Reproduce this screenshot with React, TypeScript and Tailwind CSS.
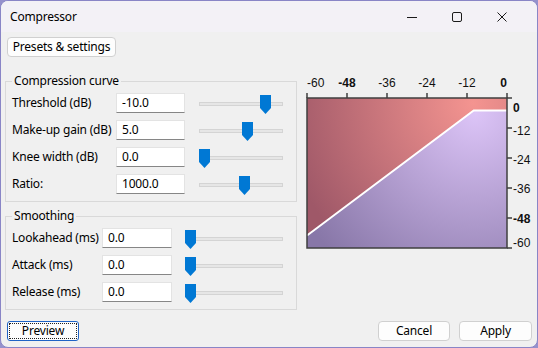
import React from 'react';

const curveRows = [
  { label: 'Threshold (dB)', value: '-10.0', pos: 61 },
  { label: 'Make-up gain (dB)', value: '5.0', pos: 43 },
  { label: 'Knee width (dB)', value: '0.0', pos: 0 },
  { label: 'Ratio:', value: '1000.0', pos: 40 },
];

const smoothRows = [
  { label: 'Lookahead (ms)', value: '0.0', pos: 0 },
  { label: 'Attack (ms)', value: '0.0', pos: 0 },
  { label: 'Release (ms)', value: '0.0', pos: 0 },
];

const ui = { fontFamily: '"Noto Sans", "Open Sans", sans-serif' };

function Slider({ width, pos }: { width: number; pos: number }) {
  return (
    <div className="relative h-[20px] shrink-0" style={{ width }}>
      <div className="absolute left-0 right-0 top-[9px] h-[4px] bg-[#e6e6e6] border border-[#d4d4d4]" />
      <svg
        className="absolute top-[2px]"
        style={{ left: pos }}
        width="11"
        height="19"
        viewBox="0 0 11 19"
      >
        <path d="M0 0 H11 V13 L5.5 19 L0 13 Z" fill="#0078d4" />
      </svg>
    </div>
  );
}

function TextBox({ value, width }: { value: string; width: number }) {
  return (
    <div
      className="h-[20px] shrink-0 bg-white border border-[#e3e3e3] border-b-[#868686] pl-[5px] text-[12px] leading-[18px] tracking-[-0.2px] text-black"
      style={{ width }}
    >
      {value}
    </div>
  );
}

function Graph() {
  const top = [
    { t: '-60', x: 7, a: 'start' },
    { t: '-48', x: 47, a: 'middle', b: true },
    { t: '-36', x: 87, a: 'middle' },
    { t: '-24', x: 127, a: 'middle' },
    { t: '-12', x: 167, a: 'middle' },
    { t: '0', x: 207, a: 'end', b: true },
  ];
  const right = [
    { t: '0', y: 34, b: true },
    { t: '-12', y: 57 },
    { t: '-24', y: 86 },
    { t: '-36', y: 115 },
    { t: '-48', y: 145, b: true },
    { t: '-60', y: 169 },
  ];
  return (
    <svg width="236" height="185" viewBox="0 0 236 185" className="shrink-0">
      <defs>
        <radialGradient id="up" cx="173" cy="30" r="190" gradientUnits="userSpaceOnUse">
          <stop offset="0" stopColor="#f49490" />
          <stop offset="1" stopColor="#9f5868" />
        </radialGradient>
        <radialGradient id="low" cx="175" cy="40" r="200" gradientUnits="userSpaceOnUse">
          <stop offset="0" stopColor="#dcc4f7" />
          <stop offset="1" stopColor="#8877a8" />
        </radialGradient>
      </defs>
      <polygon points="7,25 207,25 207,37.5 173.7,37.5 7,162.5" fill="url(#up)" />
      <polygon points="7,162.5 173.7,37.5 207,37.5 207,175 7,175" fill="url(#low)" />
      <polyline
        points="7,162.5 173.7,37.5 207,37.5"
        fill="none"
        stroke="#ffffff"
        strokeWidth="2"
      />
      <rect x="7" y="25" width="200" height="150" fill="none" stroke="#3f3f3f" strokeWidth="1.5" />
      <g fontFamily='"Liberation Sans", Arial, sans-serif' fontSize="12" fill="#111">
        {top.map((l) => (
          <g key={l.t}>
            <line x1={l.x} y1="20" x2={l.x} y2="25" stroke="#3f3f3f" strokeWidth="1.5" />
            <text
              x={l.x}
              y="14"
              textAnchor={l.a as 'start' | 'middle' | 'end'}
              fontWeight={l.b ? 700 : 400}
            >
              {l.t}
            </text>
          </g>
        ))}
        {right.map((l, i) => (
          <g key={l.t}>
            <line x1="207" y1={25 + i * 30} x2="212" y2={25 + i * 30} stroke="#3f3f3f" strokeWidth="1.5" />
            <text x="213" y={l.y + 4.5} fontWeight={l.b ? 700 : 400}>
              {l.t}
            </text>
          </g>
        ))}
      </g>
    </svg>
  );
}

function WinButton({ children, className = '' }: { children: React.ReactNode; className?: string }) {
  return (
    <button
      className={`h-[20px] bg-[#fdfdfd] border border-[#d0d0d0] rounded-[4px] text-[12px] leading-[16px] tracking-[-0.2px] text-black ${className}`}
    >
      {children}
    </button>
  );
}

export default function App() {
  return (
    <div className="w-[538px] h-[348px] bg-[#9591cc]" style={ui}>
      <div className="w-[538px] h-[348px] flex flex-col bg-[#f0f0f0] border border-[#8985c6] rounded-[8px] overflow-hidden">
        {/* Title bar */}
        <div className="h-[31px] shrink-0 flex items-center bg-[#f3f1f6] pl-[9px] pr-[13px]">
          <span className="text-[12px] tracking-[-0.2px] text-black">Compressor</span>
          <div className="ml-auto flex">
            <div className="w-[45px] h-[31px] flex items-center justify-center">
              <svg width="10" height="10" viewBox="0 0 10 10">
                <line x1="0" y1="5.5" x2="10" y2="5.5" stroke="#1a1a1a" strokeWidth="1" />
              </svg>
            </div>
            <div className="w-[45px] h-[31px] flex items-center justify-center">
              <svg width="10" height="10" viewBox="0 0 10 10">
                <rect x="0.5" y="0.5" width="9" height="9" rx="1.5" fill="none" stroke="#1a1a1a" strokeWidth="1" />
              </svg>
            </div>
            <div className="w-[45px] h-[31px] flex items-center justify-center">
              <svg width="10" height="10" viewBox="0 0 10 10">
                <path d="M0.5 0.5 L9.5 9.5 M9.5 0.5 L0.5 9.5" stroke="#1a1a1a" strokeWidth="1" />
              </svg>
            </div>
          </div>
        </div>

        {/* Client area */}
        <div className="flex-1 flex flex-col">
          <WinButton className="mt-[5px] ml-[6px] w-[109px]">Presets &amp; settings</WinButton>

          <div className="mt-[16px] ml-[4px] flex gap-[3px]">
            <div className="w-[292px] flex flex-col gap-[6px]">
              <fieldset className="border border-[#d9d9d9] px-[6px] pt-[4px] pb-[7px]">
                <legend className="px-[2px] text-[12px] leading-[16px] tracking-[-0.2px] text-black">Compression curve</legend>
                <div className="flex flex-col gap-[7px]">
                  {curveRows.map((r) => (
                    <div key={r.label} className="flex items-center h-[20px]">
                      <span className="w-[104px] shrink-0 text-[12px] tracking-[-0.2px] text-black whitespace-nowrap">{r.label}</span>
                      <TextBox value={r.value} width={69} />
                      <div className="ml-[14px]">
                        <Slider width={84} pos={r.pos} />
                      </div>
                    </div>
                  ))}
                </div>
              </fieldset>

              <fieldset className="border border-[#d9d9d9] px-[6px] pt-[4px] pb-[7px]">
                <legend className="px-[2px] text-[12px] leading-[16px] tracking-[-0.2px] text-black">Smoothing</legend>
                <div className="flex flex-col gap-[7px]">
                  {smoothRows.map((r) => (
                    <div key={r.label} className="flex items-center h-[20px]">
                      <span className="w-[90px] shrink-0 text-[12px] tracking-[-0.2px] text-black whitespace-nowrap">{r.label}</span>
                      <TextBox value={r.value} width={70} />
                      <div className="ml-[13px]">
                        <Slider width={98} pos={r.pos} />
                      </div>
                    </div>
                  ))}
                </div>
              </fieldset>
            </div>

            <Graph />
          </div>

          <div className="mt-[11px] ml-[6px] mr-[5px] flex items-center">
            <button className="w-[72px] h-[20px] p-[1px] bg-[#fdfdfd] border border-[#1f63c6] rounded-[3px] text-[12px] tracking-[-0.2px] text-black">
              <span className="flex h-full w-full items-center justify-center border border-dotted border-[#222]">
                Preview
              </span>
            </button>
            <WinButton className="ml-auto w-[72px]">Cancel</WinButton>
            <WinButton className="ml-[9px] w-[73px]">Apply</WinButton>
          </div>
        </div>
      </div>
    </div>
  );
}
